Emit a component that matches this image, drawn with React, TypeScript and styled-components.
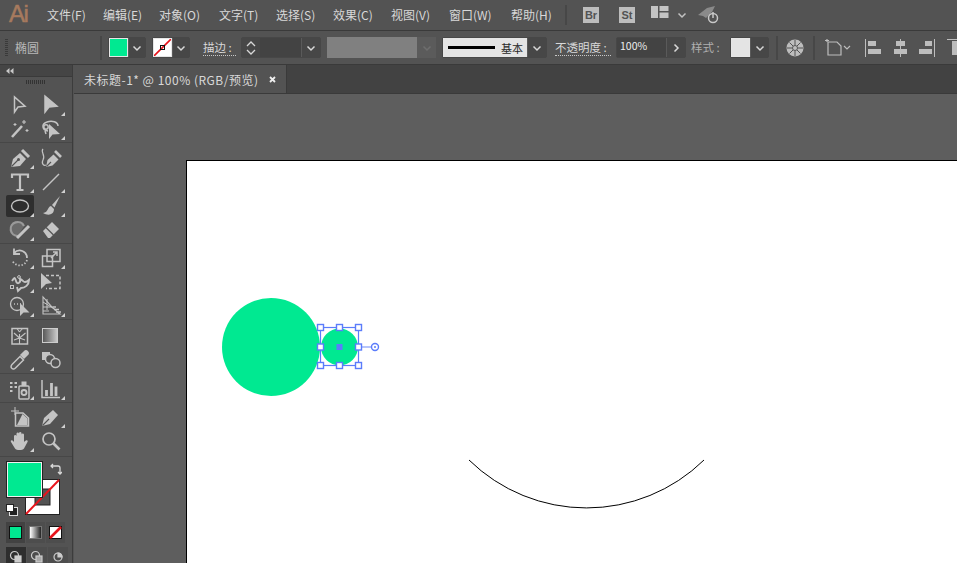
import React from "react";
import styled, { createGlobalStyle } from "styled-components";

const Global = createGlobalStyle`
  html, body { margin: 0; padding: 0; width: 957px; height: 563px; overflow: hidden; background: #535353; }
  #root { width: 957px; height: 563px; overflow: hidden; }
`;

const FONT = `"Noto Sans CJK SC", "Noto Sans", sans-serif`;

const Page = styled.div`
  width: 957px; height: 563px; display: flex; flex-direction: column; overflow: hidden;
  background: #535353; font-family: ${FONT}; color: #d4d4d4; font-size: 12px;
`;
const MenuBar = styled.header`
  height: 30px; flex: none; display: flex; align-items: center; padding-left: 9px;
  border-bottom: 1px solid #3a3a3a; background: #535353; box-sizing: content-box;
`;
const Logo = styled.div`
  width: 38px; font: normal 24px/30px "Liberation Sans", sans-serif; color: #a67a5e; letter-spacing: -1.5px; margin-top: -2px;
  -webkit-text-stroke: 0.5px #a67a5e;
`;
const MenuItem = styled.span<{ $w: number }>`
  width: ${(p) => p.$w}px; flex: none; font-size: 12px; line-height: 30px; white-space: nowrap; color: #d8d8d8;
`;
const VSep = styled.div<{ $ml: number; $mr: number; $h?: number }>`
  width: 2px; height: ${(p) => p.$h ?? 20}px; background: #474747; flex: none;
  margin-left: ${(p) => p.$ml}px; margin-right: ${(p) => p.$mr}px;
`;
const AppBadge = styled.div<{ $mr: number }>`
  width: 16px; height: 16px; background: #bdbdbd; color: #535353; flex: none; margin-right: ${(p) => p.$mr}px;
  font: bold 11px/16px "Liberation Sans", sans-serif; text-align: center;
`;
const ControlBar = styled.div`
  height: 33px; flex: none; display: flex; align-items: center; border-bottom: 1px solid #3a3a3a;
  background: #535353;
`;
const Grip = styled.div`
  width: 3px; height: 18px; margin-left: 5px; flex: none;
  background: repeating-linear-gradient(to bottom, #3a3a3a 0 1px, transparent 1px 2px);
`;
const ShapeLabel = styled.span`
  margin-left: 7px; width: 85px; flex: none; font-size: 12px; color: #b8b8b8;
`;
const Group = styled.div<{ $w: number; $ml: number }>`
  width: ${(p) => p.$w}px; margin-left: ${(p) => p.$ml}px; height: 21px; flex: none; box-sizing: border-box;
  display: flex; align-items: stretch; border: 1px solid #474747; border-radius: 2px; background: #474747;
`;
const Swatch = styled.div<{ $c: string; $w?: number }>`
  width: ${(p) => p.$w ?? 19}px; flex: none; background: ${(p) => p.$c}; display: flex; align-items: center;
  box-sizing: border-box; border: 1px solid #e6e6e6; position: relative; overflow: hidden; color: #111;
`;
const ChevronCell = styled.div<{ $w?: number; $dim?: boolean; $bare?: boolean }>`
  flex: ${(p) => (p.$w ? "none" : "1")}; width: ${(p) => (p.$w ? `${p.$w}px` : "auto")};
  display: flex; align-items: center; justify-content: center;
  border-left: ${(p) => (p.$bare ? "0" : "1px solid #5a5a5a")}; color: ${(p) => (p.$dim ? "#6e6e6e" : "#d8d8d8")};
`;
const FieldFill = styled.div`flex: 1; background: #434343;`;
const Label = styled.span<{ $w: number; $ml: number; $u?: boolean }>`
  width: ${(p) => p.$w}px; margin-left: ${(p) => p.$ml}px; flex: none; white-space: nowrap; font-size: 11.5px; line-height: 15px;
  color: ${(p) => (p.$u ? "#d8d8d8" : "#b0b0b0")};
  border-bottom: ${(p) => (p.$u ? "1px dotted #c8c8c8" : "1px solid transparent")};
`;
const DisabledField = styled.div`
  width: 109px; height: 21px; margin-left: 6px; flex: none; display: flex; background: #5b5b5b; color: #777;
`;
const DisabledFill = styled.div`width: 90px; background: #808080;`;
const StrokePreview = styled.div`
  flex: 1; background: #e4e4e4; display: flex; align-items: center; gap: 6px; padding-left: 5px; color: #2a2a2a; font-size: 11px;
`;
const StrokeLine = styled.div`width: 47px; height: 3px; background: #000; flex: none;`;
const PercentField = styled.div`
  flex: 1; background: #434343; color: #eee; font: 10.5px/16px ${FONT}; padding-left: 3px;
`;
const IconSlot = styled.div<{ $ml: number; $w: number }>`
  margin-left: ${(p) => p.$ml}px; width: ${(p) => p.$w}px; flex: none; display: flex; align-items: center; justify-content: center;
  color: #c2c2c2;
`;

const Main = styled.div`flex: 1; display: flex; min-height: 0;`;
const ToolPanel = styled.aside`
  width: 72px; flex: none; background: #535353; border-right: 1px solid #3c3c3c; display: flex; flex-direction: column;
`;
const PanelHead = styled.div`
  height: 11px; flex: none; background: #454545; border-bottom: 1px solid #3a3a3a; padding-left: 6px;
  display: flex; align-items: center;
`;
const ToolGrip = styled.div`
  width: 19px; height: 4px; margin: 3px auto 0 26px; flex: none;
  background: repeating-linear-gradient(to right, #333 0 1px, transparent 1px 2px);
`;
const ToolSection = styled.div<{ $pt: number; $line?: boolean }>`
  display: grid; grid-template-columns: 31px 31px; justify-content: start; padding: ${(p) => p.$pt}px 0 0 6px;
  grid-auto-rows: 24px; margin: 0;
  border-top: ${(p) => (p.$line ? "1px solid #474747" : "none")};
`;
const ToolBtn = styled.div<{ $active?: boolean; $more?: boolean }>`
  width: 28px; height: 22px; position: relative; display: flex; align-items: center; justify-content: center;
  border-radius: 2px; background: ${(p) => (p.$active ? "#2e2e2e" : "transparent")}; color: #c4c4c4;
  &::after {
    content: ""; display: ${(p) => (p.$more ? "block" : "none")}; position: absolute; right: 0; bottom: 0;
    border-left: 4px solid transparent; border-bottom: 4px solid #d0d0d0;
  }
`;
const ColorArea = styled.div`
  position: relative; height: 61px; flex: none; margin-top: 2px;
  border-top: 1px solid #474747;
`;
const FillBig = styled.div`
  position: absolute; left: 7px; top: 5px; width: 35px; height: 35px; box-sizing: border-box; z-index: 2;
  background: #00e991; border: 1px solid #f0f0f0; outline: 1px solid #222;
`;
const StrokeBig = styled.div`
  position: absolute; left: 25px; top: 22px; width: 35px; height: 36px; z-index: 1;
`;
const SwapIcon = styled.div`position: absolute; left: 50px; top: 5px; color: #d8d8d8;`;
const DefaultIcon = styled.div`position: absolute; left: 6px; top: 45px;`;
const ModeRow = styled.div`
  display: flex; gap: 0; margin: 4px 0 0 6px; height: 21px; flex: none;
`;
const ModeBtn = styled.div<{ $active?: boolean }>`
  width: 20px; height: 21px; display: flex; align-items: center; justify-content: center; box-sizing: border-box;
  background: ${(p) => (p.$active ? "#424242" : "#4d4d4d")}; border-right: 1px solid #535353;
`;
const ModeChip = styled.div<{ $bg: string; $soft?: boolean }>`
  width: 13px; height: 13px; box-sizing: border-box; border: 1px solid ${(p) => (p.$soft ? "#777" : "#111")}; background: ${(p) => p.$bg};
`;
const DrawRow = styled.div`display: flex; margin: 4px 0 0 6px; height: 20px; flex: none;`;
const DrawBtn = styled.div<{ $active?: boolean }>`
  width: 20px; height: 20px; display: flex; align-items: center; justify-content: center;
  background: ${(p) => (p.$active ? "#2e2e2e" : "#4d4d4d")}; border-right: 1px solid #535353; color: #c8c8c8;
`;

const Work = styled.div`flex: 1; min-width: 0; display: flex; flex-direction: column; margin-left: 1px;`;
const TabBar = styled.div`
  height: 28px; flex: none; background: #424242; border-bottom: 1px solid #3a3a3a; display: flex;
`;
const Tab = styled.div`
  width: 213px; height: 28px; flex: none; background: #535353; border-right: 1px solid #3a3a3a; box-sizing: border-box;
  padding: 0 10px 0 10px; display: flex; align-items: center; justify-content: space-between; font-size: 12px; letter-spacing: 0.5px; color: #d8d8d8; white-space: nowrap;
`;
const Canvas = styled.div`
  flex: 1; background: #5e5e5e; position: relative; overflow: hidden;
`;
const Artboard = styled.div`
  position: absolute; left: 112px; top: 66px; width: 800px; height: 500px; background: #fff; border: 1px solid #000; border-right: 0; border-bottom: 0;
`;
const ArtSvg = styled.svg`position: absolute; left: 0; top: 0;`;

const Chevron = ({ dir = "down" }: { dir?: "down" | "right" | "up" }) => (
  <svg width="10" height="10" viewBox="0 0 10 10" fill="none" stroke="currentColor" strokeWidth="1.5">
    <path d={dir === "down" ? "M1.5 3.5 5 7l3.5-3.5" : dir === "up" ? "M1.5 6.5 5 3l3.5 3.5" : "M3.5 1.5 7 5 3.5 8.5"} />
  </svg>
);

const NoneSwatch = () => (
  <svg width="19" height="19" viewBox="0 0 19 19" style={{ position: "absolute", left: -1, top: -1 }}>
    <rect width="19" height="19" fill="#fff" />
    <path d="M1 18 18 1" stroke="#e8141c" strokeWidth="1.6" />
    <rect x="7.5" y="7.5" width="4" height="4" fill="none" stroke="#111" />
  </svg>
);

const S = (p: React.SVGProps<SVGSVGElement>) => (
  <svg width="22" height="22" viewBox="0 0 22 22" fill="none" stroke="currentColor" strokeWidth="1.5" {...p} />
);
const BG = "#535353";

const tools1: [React.ReactNode, boolean][] = [
  [<S><path d="M5.500 3v15l3.500-5 7-.8z" /></S>, false],
  [<S><path d="M5 2v16l4-5 8-.8z" fill="currentColor" /></S>, true],
  [<S><path d="M3 19 13 8" strokeWidth="2.600" /><path d="M15 2v4M13 4h4M6 5v3M4.500 6.500h3M18 11v3M16.500 12.500h3" strokeWidth="1.100" /></S>, false],
  [<S><path d="M8 13C2 12 1 6 7 4c5-2 11 0 11 4" /><circle cx="6" cy="9" r="2.200" /><path d="M9 6v15l3.500-4.500 7.500-.5z" fill="currentColor" stroke="none" /><path d="M5 13l1 3" /></S>, true],
];
const tools2: [React.ReactNode, boolean][] = [
  [<S><path d="M2 20 4 12l7-6 6 6-6 7z" fill="currentColor" stroke="none" /><path d="M13 3l7 7" strokeWidth="3" /><path d="M2.500 19.500 9 13" stroke={BG} strokeWidth="1.100" /><circle cx="9.500" cy="12.500" r="1.500" fill={BG} stroke="none" /></S>, true],
  [<S><path d="M3 2C0 5 6 8 3 13c-2 4 1 6 3 5" strokeWidth="1.200" /><path d="M6 20l1.500-7 6-5.500 5 5-6 6z" fill="currentColor" stroke="none" /><path d="M15 4l6 6" strokeWidth="2.600" /><path d="M6.500 19.500 11 15" stroke={BG} strokeWidth="1.100" /></S>, false],
  [<S><path d="M3 7V3.500h16V7M11 3.500V19M7.500 19h7" strokeWidth="2.200" /></S>, true],
  [<S><path d="M3 19 19 3" strokeWidth="1.500" /></S>, true],
  [<svg width="24" height="16" viewBox="0 0 24 16" fill="none" stroke="currentColor" strokeWidth="1.400"><ellipse cx="12" cy="8" rx="8.500" ry="6" /></svg>, true],
  [<S><path d="M20 1 12 10l2.500 2.500z" fill="currentColor" stroke="none" /><path d="M11 11c-4 1-2 6-8 7 5 3 11 2 11-4z" fill="currentColor" stroke="none" /></S>, true],
  [<S><path d="M9 17a7 7 0 1 1 6-10" strokeWidth="2.200" stroke="#9a9a9a" fill="#6a6a6a" /><path d="M8 19 20 7" strokeWidth="3" /></S>, true],
  [<S><path d="M3 12 12 3l7 7-9 9H8z" fill="currentColor" stroke="none" /><path d="M6 8.500l7.500 7.500" stroke={BG} strokeWidth="1.200" /></S>, false],
];
const tools3: [React.ReactNode, boolean][] = [
  [<S><path d="M5 6c5-5 13-2 13 5" strokeWidth="1.800" /><path d="M5 1.500v5.500h6" strokeWidth="1.800" /><path d="M18 13c-2 6-9 7-13 3-1-1-1.500-2-1.500-3" strokeDasharray="1.400 1.800" strokeWidth="1.800" /></S>, true],
  [<S><rect x="2.500" y="9" width="10" height="10.500" /><rect x="7" y="2.500" width="13" height="12" /><path d="M11 11l6-6M13 5h4v4" /></S>, true],
  [<S><path d="M3 10c3-5 3-3 4 0 1 4 5 2 4-2 3 1 3 3 5 3 2 0 3-1 4-2 0 5-4 8-8 8l-3 3-1-4" strokeWidth="1.900" /><rect x="1.500" y="14.500" width="3" height="3" strokeWidth="1" /><circle cx="10" cy="6" r="1.400" strokeWidth="1" /></S>, true],
  [<S><path d="M1 2v16l5-5 6-1z" fill="currentColor" stroke="none" /><path d="M6 4.500h14v13H6" strokeWidth="1.500" strokeDasharray="3 2" /></S>, false],
  [<S><circle cx="8" cy="9" r="6.500" strokeWidth="1.300" /><path d="M5 9h1M8 9h1M11 9h1" /><path d="M11 8v13l3.500-3.500 6 0z" fill="currentColor" stroke="none" /></S>, true],
  [<S><path d="M3 2v17h17l-7-6z" strokeWidth="1.100" /><path d="M3 7l10 6M7 4v11M3 12h10M3 16h6" strokeWidth="1" /><path d="M13 12h3M14 14.500h5M16 17h5" strokeWidth="1.500" /></S>, true],
];
const tools4: [React.ReactNode, boolean][] = [
  [<S><rect x="3" y="3.500" width="15.500" height="15.500" /><path d="M10.500 19V9M10.500 13 5 8M10.500 13l6-5M5 15l5.500-2M16 15l-5.500-2M10.500 7 8 3.500M10.500 7l3-3.500" strokeWidth="1.100" /></S>, false],
  [<svg width="18" height="16" viewBox="0 0 18 16"><defs><linearGradient id="tg"><stop offset="0" stopColor="#555" /><stop offset="1" stopColor="#ccc" /></linearGradient></defs><rect x=".5" y=".5" width="15" height="14" fill="url(#tg)" stroke="#ccc" /></svg>, false],
  [<S><path d="M3 19.500c-1.500-1 -1-3 0-4l8-8 3.500 3.500-8 8c-1 1-2.500 1.500-3.500.5z" /><path d="M12 6l4-4c1.500-1 4 1.500 3 3l-4 4z" fill="currentColor" /></S>, true],
  [<S><rect x="2" y="3" width="8" height="8" fill="currentColor" stroke="none" /><circle cx="10" cy="10" r="4.500" fill={BG} /><circle cx="15.500" cy="14" r="4.500" fill={BG} /></S>, false],
];
const tools5: [React.ReactNode, boolean][] = [
  [<S><rect x="10" y="8" width="10" height="13" rx="1" /><rect x="12.500" y="3.500" width="5" height="4.500" fill="currentColor" stroke="none" /><circle cx="15" cy="14.500" r="2.500" strokeWidth="1.800" /><path d="M1 5h2.500M5.500 5H8M1 9h2.500M5.500 9H8M1 13h2.500" strokeWidth="2" /></S>, true],
  [<S><path d="M2 2v17.500h18" /><path d="M6.500 18v-6M11.500 18V5M16 18V8.500" strokeWidth="2.800" /></S>, true],
];
const tools6: [React.ReactNode, boolean][] = [
  [<S><path d="M6 1v8M2 5h8" strokeWidth="1" /><path d="M6.500 7H14l5.500 5v8h-13z" /><path d="M13.500 8l5 4.500V19H8z" fill="currentColor" stroke="none" /></S>, false],
  [<S><path d="M2 20l2-8 9-8 5 5-8 9z" fill="currentColor" stroke="none" /><path d="M2.500 19.500 9 13" stroke={BG} strokeWidth="1.100" /></S>, true],
];
const tools7: [React.ReactNode, boolean][] = [
  [<S><path d="M5 12V6a1.300 1.300 0 0 1 2.500 0V3.500a1.300 1.300 0 0 1 2.500 0V3a1.300 1.300 0 0 1 2.500 0v1.500a1.300 1.300 0 0 1 2.500 0V12c2.500-3 4.500-1.500 3.500 0l-3.500 6.500c-1.500 2-7.500 2-9 0L2 12c-1-1.500 1-3 3 0z" fill="currentColor" stroke="none" /></S>, true],
  [<S><circle cx="9" cy="9" r="6" strokeWidth="1.700" /><path d="M13.500 13.500l6 6" strokeWidth="2.600" /></S>, false],
];

const ToolGroup = ({ items, pt, line, activeIndex }: { items: [React.ReactNode, boolean][]; pt: number; line?: boolean; activeIndex?: number }) => (
  <ToolSection $pt={pt} $line={line}>
    {items.map(([icon, more], i) => (
      <ToolBtn key={i} $more={more} $active={i === activeIndex}>{icon}</ToolBtn>
    ))}
  </ToolSection>
);

const menus: [string, number][] = [
  ["文件(F)", 56], ["编辑(E)", 56], ["对象(O)", 60], ["文字(T)", 57], ["选择(S)", 57],
  ["效果(C)", 58], ["视图(V)", 58], ["窗口(W)", 62], ["帮助(H)", 46],
];

const AlignIcon = ({ kind }: { kind: number }) => (
  <svg width="17" height="18" viewBox="0 0 17 18" fill="#bdbdbd">
    {kind === 0 && <><rect x="0" width="1" height="18" /><rect x="3" y="2" width="8" height="5" /><rect x="3" y="10" width="13" height="5" /></>}
    {kind === 1 && <><rect x="8" width="1" height="18" /><rect x="4" y="2" width="9" height="5" /><rect x="2" y="10" width="13" height="5" /></>}
    {kind === 2 && <><rect x="16" width="1" height="18" /><rect x="7" y="2" width="7" height="5" /><rect x="1" y="10" width="13" height="5" /></>}
    {kind === 3 && <><rect x="1" y="0" width="16" height="1" /><rect x="6" y="2" width="6" height="14" /></>}
  </svg>
);

export default function App() {
  return (
    <Page>
      <Global />
      <MenuBar>
        <Logo>Ai</Logo>
        {menus.map(([m, w]) => <MenuItem key={m} $w={w}>{m}</MenuItem>)}
        <VSep $ml={8} $mr={16} />
        <AppBadge $mr={20}>Br</AppBadge>
        <AppBadge $mr={16}>St</AppBadge>
        <svg width="18" height="12" viewBox="0 0 18 12" fill="#c4c4c4" style={{ marginTop: -6 }}>
          <rect width="7" height="12" /><rect x="8.500" width="9" height="5" /><rect x="8.500" y="6.500" width="9" height="5.500" />
        </svg>
        <IconSlot $ml={7} $w={12}><Chevron /></IconSlot>
        <IconSlot $ml={8} $w={26}>
          <svg width="24" height="20" viewBox="0 0 24 20" fill="none">
            <path d="M1 10 10 3l8-2-3 6-6 6-3-2z" fill="#8a8a8a" />
            <circle cx="16" cy="13" r="4.500" stroke="#c8c8c8" strokeWidth="1.500" />
            <path d="M16 7v6" stroke="#c8c8c8" strokeWidth="1.500" />
          </svg>
        </IconSlot>
      </MenuBar>
      <ControlBar>
        <Grip />
        <ShapeLabel>椭圆</ShapeLabel>
        <VSep $ml={0} $mr={0} $h={24} />
        <Group $w={38} $ml={6}>
          <Swatch $c="#00e991" />
          <ChevronCell><Chevron /></ChevronCell>
        </Group>
        <Group $w={38} $ml={6}>
          <Swatch $c="#fff"><NoneSwatch /></Swatch>
          <ChevronCell><Chevron /></ChevronCell>
        </Group>
        <Label $w={33} $ml={13} $u>描边 :</Label>
        <Group $w={80} $ml={5}>
          <ChevronCell $w={18} $bare>
            <svg width="12" height="16" viewBox="0 0 12 16" fill="none" stroke="#d8d8d8" strokeWidth="1.300"><path d="M2 6l4-4 4 4M2 10l4 4 4-4" /></svg>
          </ChevronCell>
          <FieldFill />
          <ChevronCell $w={18}><Chevron /></ChevronCell>
        </Group>
        <DisabledField>
          <DisabledFill />
          <ChevronCell $bare $dim><Chevron /></ChevronCell>
        </DisabledField>
        <Group $w={105} $ml={6}>
          <StrokePreview><StrokeLine /><span>基本</span></StrokePreview>
          <ChevronCell $w={18}><Chevron /></ChevronCell>
        </Group>
        <Label $w={56} $ml={8} $u>不透明度 :</Label>
        <Group $w={70} $ml={5}>
          <PercentField>100%</PercentField>
          <ChevronCell $w={18}><Chevron dir="right" /></ChevronCell>
        </Group>
        <Label $w={33} $ml={5}>样式 :</Label>
        <Group $w={39} $ml={6}>
          <Swatch $c="#e4e4e4" />
          <ChevronCell><Chevron /></ChevronCell>
        </Group>
        <VSep $ml={7} $mr={0} $h={24} />
        <IconSlot $ml={8} $w={18}>
          <svg width="18" height="18" viewBox="0 0 18 18" fill="none" stroke="#535353">
            <circle cx="9" cy="9" r="8.500" fill="#bdbdbd" stroke="none" />
            <circle cx="9" cy="9" r="2.500" />
            <path d="M9 1v5M9 12v5M1 9h5M12 9h5M3.500 3.500l3.500 3.500M11 11l3.500 3.500M14.500 3.500 11 7M7 11l-3.500 3.500" />
          </svg>
        </IconSlot>
        <VSep $ml={9} $mr={0} $h={24} />
        <IconSlot $ml={10} $w={27}>
          <svg width="27" height="18" viewBox="0 0 27 18" fill="none" stroke="#bdbdbd" strokeWidth="1.200">
            <path d="M2 0v3M0 1.500h4" /><path d="M3 3h9l4 4v9H3z" /><path d="M19 7l3 3 3-3" />
          </svg>
        </IconSlot>
        <IconSlot $ml={13} $w={17}><AlignIcon kind={0} /></IconSlot>
        <IconSlot $ml={10} $w={17}><AlignIcon kind={1} /></IconSlot>
        <IconSlot $ml={9} $w={17}><AlignIcon kind={2} /></IconSlot>
        <IconSlot $ml={11} $w={17}><AlignIcon kind={3} /></IconSlot>
      </ControlBar>
      <Main>
        <ToolPanel>
          <PanelHead>
            <svg width="8" height="6" viewBox="0 0 8 6" fill="#c8c8c8"><path d="M3.500 0v6L0 3zM7.500 0v6L4 3z" /></svg>
          </PanelHead>
          <ToolGrip />
          <ToolGroup items={tools1} pt={10} />
          <ToolGroup items={tools2} pt={4} line activeIndex={4} />
          <ToolGroup items={tools3} pt={3} line />
          <ToolGroup items={tools4} pt={5} line />
          <ToolGroup items={tools5} pt={4} line />
          <ToolGroup items={tools6} pt={3} line />
          <ToolGroup items={tools7} pt={0} />
          <ColorArea>
            <FillBig />
            <StrokeBig>
              <svg width="35" height="36" viewBox="0 0 35 36">
                <rect x=".5" y=".5" width="34" height="35" fill="#fff" stroke="#222" />
                <rect x="10" y="10" width="15" height="16" fill="#535353" stroke="#222" />
                <path d="M1 35 34 1" stroke="#e8141c" strokeWidth="2" />
              </svg>
            </StrokeBig>
            <SwapIcon>
              <svg width="12" height="14" viewBox="0 0 12 14" fill="none" stroke="currentColor" strokeWidth="1.300">
                <path d="M1 4h7a2 2 0 0 1 2 2v6M3 2 1 4l2 2M8 10l2 2 2-2" />
              </svg>
            </SwapIcon>
            <DefaultIcon>
              <svg width="12" height="12" viewBox="0 0 12 12">
                <rect x="3.500" y="3.500" width="8" height="8" fill="#222" stroke="#ddd" />
                <rect x=".5" y=".5" width="7" height="7" fill="#fff" stroke="#222" />
              </svg>
            </DefaultIcon>
          </ColorArea>
          <ModeRow>
            <ModeBtn $active><ModeChip $bg="#00e991" /></ModeBtn>
            <ModeBtn><ModeChip $soft $bg="linear-gradient(to right,#fff,#222)" /></ModeBtn>
            <ModeBtn>
              <svg width="13" height="13" viewBox="0 0 13 13"><rect x=".5" y=".5" width="12" height="12" fill="#fff" stroke="#111" /><path d="M1 12 12 1" stroke="#e8141c" strokeWidth="2.600" /></svg>
            </ModeBtn>
          </ModeRow>
          <DrawRow>
            <DrawBtn $active>
              <svg width="14" height="14" viewBox="0 0 14 14" fill="none" stroke="#ccc" strokeWidth="1.200"><circle cx="5.500" cy="5.500" r="4" /><rect x="6" y="6" width="6" height="6" fill="#ccc" /></svg>
            </DrawBtn>
            <DrawBtn>
              <svg width="14" height="14" viewBox="0 0 14 14" fill="none" stroke="#ccc" strokeWidth="1.200"><circle cx="5.500" cy="5.500" r="4" /><rect x="6" y="6" width="6" height="6" fill="#aaa" /></svg>
            </DrawBtn>
            <DrawBtn>
              <svg width="14" height="14" viewBox="0 0 14 14" fill="none" stroke="#ccc" strokeWidth="1.200"><circle cx="7" cy="7" r="4" /><path d="M7 7h4a4 4 0 0 0-4-4z" fill="#ccc" /></svg>
            </DrawBtn>
          </DrawRow>
        </ToolPanel>
        <Work>
          <TabBar>
            <Tab>
              未标题-1* @ 100% (RGB/预览)
              <svg width="7" height="7" viewBox="0 0 7 7" stroke="#eee" strokeWidth="1.800"><path d="M1 1l5 5M6 1 1 6" /></svg>
            </Tab>
          </TabBar>
          <Canvas>
            <Artboard>
              <ArtSvg width="771" height="403" viewBox="187 161 771 403">
                <circle cx="271" cy="347" r="49" fill="#00e991" />
                <circle cx="339.500" cy="347" r="18.500" fill="#00e991" />
                <path d="M469 460A168 168 0 0 0 704 460" fill="none" stroke="#000" strokeWidth="1" />
                <rect x="320.500" y="327.500" width="38" height="38" fill="none" stroke="#5b7cfb" strokeWidth="1.200" />
                <path d="M359 347h13" stroke="#9db0fb" strokeWidth="1.500" />
                <circle cx="375" cy="347" r="3.500" fill="#fff" stroke="#5b7cfb" strokeWidth="1.400" />
                <circle cx="375" cy="347" r="1" fill="#5b7cfb" />
                <rect x="336.500" y="344" width="6" height="6" fill="#5b7cfb" />
                {[[320, 327], [339, 327], [358, 327], [320, 346.500], [358, 346.500], [320, 365], [339, 365], [358, 365]].map(([x, y]) => (
                  <rect key={`${x}-${y}`} x={x - 2.500} y={y - 2.500} width="6" height="6" fill="#fff" stroke="#5b7cfb" strokeWidth="1.400" />
                ))}
              </ArtSvg>
            </Artboard>
          </Canvas>
        </Work>
      </Main>
    </Page>
  );
}
